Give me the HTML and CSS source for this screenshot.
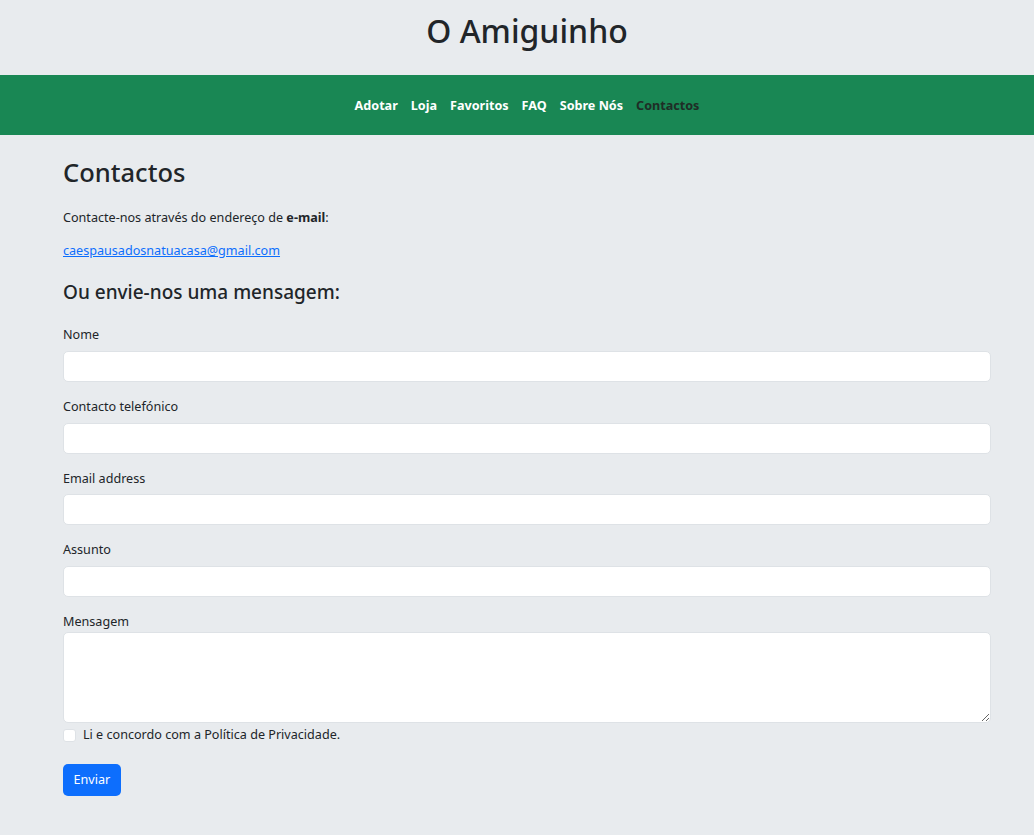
FILE: index.html
```html
<!DOCTYPE html>
<html lang="pt">
<head>
<meta charset="utf-8">
<title>O Amiguinho - Contactos</title>
<link rel="stylesheet" href="styles.css">
</head>
<body>
<header class="site-header">
  <h1 class="site-title">O Amiguinho</h1>
</header>
<nav class="main-nav">
  <a class="nav-link" href="#">Adotar</a>
  <a class="nav-link" href="#">Loja</a>
  <a class="nav-link" href="#">Favoritos</a>
  <a class="nav-link" href="#">FAQ</a>
  <a class="nav-link" href="#">Sobre Nós</a>
  <a class="nav-link active" href="#">Contactos</a>
</nav>
<main class="content">
  <h2 class="page-title">Contactos</h2>
  <p class="text">Contacte-nos através do endereço de <strong>e-mail</strong>:</p>
  <p class="text"><a class="mail" href="#">caespausadosnatuacasa@gmail.com</a></p>
  <h4 class="sub-title">Ou envie-nos uma mensagem:</h4>
  <form class="form">
    <div class="group">
      <label class="label">Nome</label>
      <input class="field" type="text">
    </div>
    <div class="group">
      <label class="label">Contacto telefónico</label>
      <input class="field" type="text">
    </div>
    <div class="group">
      <label class="label">Email address</label>
      <input class="field" type="email">
    </div>
    <div class="group">
      <label class="label">Assunto</label>
      <input class="field" type="text">
    </div>
    <div class="group-last">
      <label class="label label-tight">Mensagem</label>
      <textarea class="field area"></textarea>
    </div>
    <div class="check">
      <input class="check-box" type="checkbox" id="agree">
      <label class="check-label" for="agree">Li e concordo com a Política de Privacidade.</label>
    </div>
    <button class="btn" type="button">Enviar</button>
  </form>
</main>
</body>
</html>
```
FILE: styles.css
```css
* { box-sizing: border-box; }
html, body {
  margin: 0;
  padding: 0;
  background: #e8ebee;
  color: #212529;
  font-family: "Noto Sans", "Open Sans", Arial, sans-serif;
  font-size: 12.6px;
}
.site-header {
  height: 75px;
  display: flex;
  align-items: center;
  justify-content: center;
  padding-left: 20px;
}
.site-title {
  margin: 0;
  font-weight: 500;
  font-size: 32px;
  line-height: 1;
  padding-bottom: 13px;
  color: #212529;
}
.main-nav {
  background: #198754;
  height: 60px;
  display: flex;
  align-items: center;
  justify-content: center;
  padding-left: 20px;
}
.nav-link {
  color: #fff;
  font-weight: 700;
  text-decoration: none;
  padding: 0 6.5px;
  font-size: 12.6px;
}
.nav-link.active { color: #1f2d26; }
.content {
  padding: 0 43px 0 63px;
}
.page-title {
  margin: 22px 0 21px;
  font-size: 25.5px;
  font-weight: 500;
  line-height: 1.2;
}
.text {
  margin: 0 0 15px;
  line-height: 1.5;
}
.text strong { font-weight: 700; }
.mail { color: #0d6efd; text-decoration: underline; }
.sub-title {
  margin: 20px 0 22px;
  font-size: 19px;
  font-weight: 500;
  line-height: 1.2;
}
.group { margin-bottom: 15.8px; }
.group-last { margin-bottom: 3px; }
.label {
  display: block;
  margin-bottom: 6px;
  line-height: 1.5;
}
.field {
  display: block;
  width: 100%;
  height: 31px;
  border: 1px solid #dee2e6;
  border-radius: 5px;
  background: #fff;
  font: inherit;
}
.area { height: 91px; resize: vertical; }
.label-tight { margin-bottom: 0; }
.check {
  display: flex;
  align-items: center;
  gap: 7px;
  height: 20px;
  margin-top: 1px;
}
.check-box {
  margin: 0;
  width: 13px;
  height: 13px;
  appearance: none;
  -webkit-appearance: none;
  background: #fff;
  border: 1px solid #dee2e6;
  border-radius: 3px;
}
.check-label { line-height: 1.5; }
.btn {
  margin-top: 18px;
  background: #0d6efd;
  color: #fff;
  border: none;
  border-radius: 5px;
  height: 32px;
  padding: 0 10.5px;
  font: inherit;
}
```
